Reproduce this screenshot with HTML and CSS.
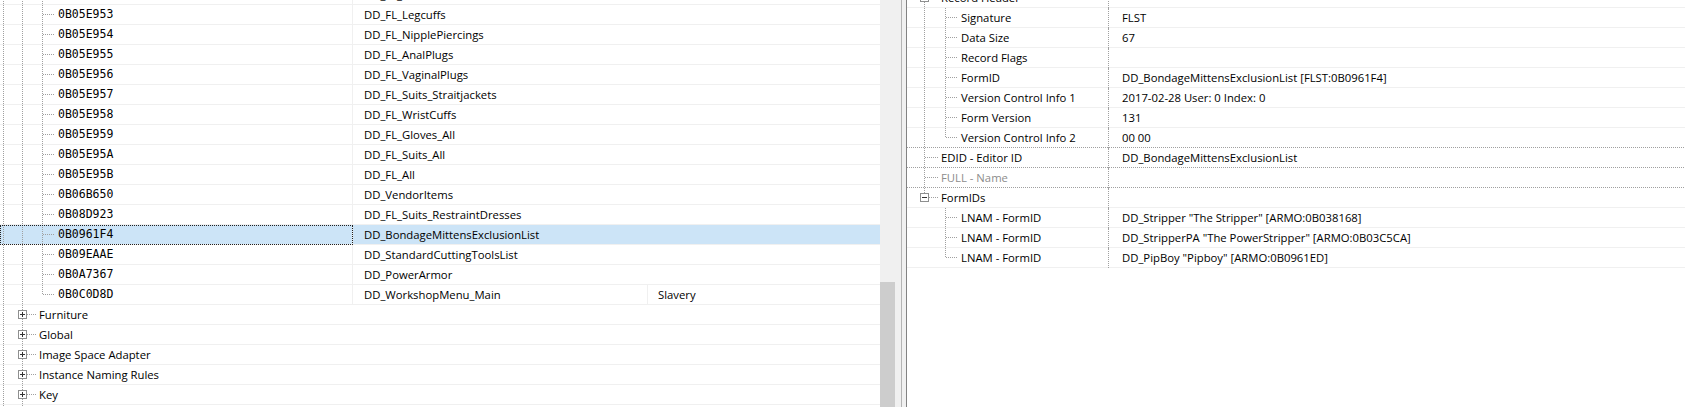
FILE: index.html
```html
<!DOCTYPE html>
<html lang="en">
<head>
  <meta charset="UTF-8" />
  <title>FormID List</title>
  <link rel="stylesheet" href="styles.css">
</head>
<body>
  <div class="window">

    <!-- record tree (left) -->
    <section class="pane-left">
      <div class="list">
        <div class="row">
          <div class="cell c-id"><i class="g w19 ln"></i><i class="g w20 ln"></i><i class="g w19 tee"></i><span class="fid">0B05E952</span></div>
          <div class="cell c-name">DD_FL_Harnesses</div>
          <div class="cell c-extra"></div>
        </div>
        <div class="row">
          <div class="cell c-id"><i class="g w19 ln"></i><i class="g w20 ln"></i><i class="g w19 tee"></i><span class="fid">0B05E953</span></div>
          <div class="cell c-name">DD_FL_Legcuffs</div>
          <div class="cell c-extra"></div>
        </div>
        <div class="row">
          <div class="cell c-id"><i class="g w19 ln"></i><i class="g w20 ln"></i><i class="g w19 tee"></i><span class="fid">0B05E954</span></div>
          <div class="cell c-name">DD_FL_NipplePiercings</div>
          <div class="cell c-extra"></div>
        </div>
        <div class="row">
          <div class="cell c-id"><i class="g w19 ln"></i><i class="g w20 ln"></i><i class="g w19 tee"></i><span class="fid">0B05E955</span></div>
          <div class="cell c-name">DD_FL_AnalPlugs</div>
          <div class="cell c-extra"></div>
        </div>
        <div class="row">
          <div class="cell c-id"><i class="g w19 ln"></i><i class="g w20 ln"></i><i class="g w19 tee"></i><span class="fid">0B05E956</span></div>
          <div class="cell c-name">DD_FL_VaginalPlugs</div>
          <div class="cell c-extra"></div>
        </div>
        <div class="row">
          <div class="cell c-id"><i class="g w19 ln"></i><i class="g w20 ln"></i><i class="g w19 tee"></i><span class="fid">0B05E957</span></div>
          <div class="cell c-name">DD_FL_Suits_Straitjackets</div>
          <div class="cell c-extra"></div>
        </div>
        <div class="row">
          <div class="cell c-id"><i class="g w19 ln"></i><i class="g w20 ln"></i><i class="g w19 tee"></i><span class="fid">0B05E958</span></div>
          <div class="cell c-name">DD_FL_WristCuffs</div>
          <div class="cell c-extra"></div>
        </div>
        <div class="row">
          <div class="cell c-id"><i class="g w19 ln"></i><i class="g w20 ln"></i><i class="g w19 tee"></i><span class="fid">0B05E959</span></div>
          <div class="cell c-name">DD_FL_Gloves_All</div>
          <div class="cell c-extra"></div>
        </div>
        <div class="row">
          <div class="cell c-id"><i class="g w19 ln"></i><i class="g w20 ln"></i><i class="g w19 tee"></i><span class="fid">0B05E95A</span></div>
          <div class="cell c-name">DD_FL_Suits_All</div>
          <div class="cell c-extra"></div>
        </div>
        <div class="row">
          <div class="cell c-id"><i class="g w19 ln"></i><i class="g w20 ln"></i><i class="g w19 tee"></i><span class="fid">0B05E95B</span></div>
          <div class="cell c-name">DD_FL_All</div>
          <div class="cell c-extra"></div>
        </div>
        <div class="row">
          <div class="cell c-id"><i class="g w19 ln"></i><i class="g w20 ln"></i><i class="g w19 tee"></i><span class="fid">0B06B650</span></div>
          <div class="cell c-name">DD_VendorItems</div>
          <div class="cell c-extra"></div>
        </div>
        <div class="row">
          <div class="cell c-id"><i class="g w19 ln"></i><i class="g w20 ln"></i><i class="g w19 tee"></i><span class="fid">0B08D923</span></div>
          <div class="cell c-name">DD_FL_Suits_RestraintDresses</div>
          <div class="cell c-extra"></div>
        </div>
        <div class="row sel">
          <div class="cell c-id"><i class="g w19 ln"></i><i class="g w20 ln"></i><i class="g w19 tee"></i><span class="fid">0B0961F4</span></div>
          <div class="cell c-name">DD_BondageMittensExclusionList</div>
          <div class="cell c-extra"></div>
        </div>
        <div class="row">
          <div class="cell c-id"><i class="g w19 ln"></i><i class="g w20 ln"></i><i class="g w19 tee"></i><span class="fid">0B09EAAE</span></div>
          <div class="cell c-name">DD_StandardCuttingToolsList</div>
          <div class="cell c-extra"></div>
        </div>
        <div class="row">
          <div class="cell c-id"><i class="g w19 ln"></i><i class="g w20 ln"></i><i class="g w19 tee"></i><span class="fid">0B0A7367</span></div>
          <div class="cell c-name">DD_PowerArmor</div>
          <div class="cell c-extra"></div>
        </div>
        <div class="row">
          <div class="cell c-id"><i class="g w19 ln"></i><i class="g w20 ln"></i><i class="g w19 end"></i><span class="fid">0B0C0D8D</span></div>
          <div class="cell c-name has-extra">DD_WorkshopMenu_Main</div>
          <div class="cell c-extra">Slavery</div>
        </div>

        <div class="row grp">
          <div class="cell"><i class="g w19 ln"></i><i class="g w20 node"><b class="exp plus"></b></i><span>Furniture</span></div>
        </div>
        <div class="row grp">
          <div class="cell"><i class="g w19 ln"></i><i class="g w20 node"><b class="exp plus"></b></i><span>Global</span></div>
        </div>
        <div class="row grp">
          <div class="cell"><i class="g w19 ln"></i><i class="g w20 node"><b class="exp plus"></b></i><span>Image Space Adapter</span></div>
        </div>
        <div class="row grp">
          <div class="cell"><i class="g w19 ln"></i><i class="g w20 node"><b class="exp plus"></b></i><span>Instance Naming Rules</span></div>
        </div>
        <div class="row grp">
          <div class="cell"><i class="g w19 ln"></i><i class="g w20 node"><b class="exp plus"></b></i><span>Key</span></div>
        </div>
        <div class="row grp">
          <div class="cell"><i class="g w19 ln"></i><i class="g w20 node"><b class="exp plus"></b></i><span>Keyword</span></div>
        </div>
      </div>
    </section>

    <div class="vscroll"><div class="thumb"></div></div>
    <div class="splitter"></div>

    <!-- record view (right) -->
    <section class="pane-right">
      <div class="tree">
        <div class="row">
          <div class="cell c-key"><i class="g w21 node"><b class="exp minus"></b></i><span>Record Header</span></div>
          <div class="cell c-val"></div>
        </div>
        <div class="row">
          <div class="cell c-key"><i class="g w21 ln"></i><i class="g w20 tee"></i><span>Signature</span></div>
          <div class="cell c-val">FLST</div>
        </div>
        <div class="row">
          <div class="cell c-key"><i class="g w21 ln"></i><i class="g w20 tee"></i><span>Data Size</span></div>
          <div class="cell c-val">67</div>
        </div>
        <div class="row">
          <div class="cell c-key"><i class="g w21 ln"></i><i class="g w20 tee"></i><span>Record Flags</span></div>
          <div class="cell c-val"></div>
        </div>
        <div class="row">
          <div class="cell c-key"><i class="g w21 ln"></i><i class="g w20 tee"></i><span>FormID</span></div>
          <div class="cell c-val">DD_BondageMittensExclusionList [FLST:0B0961F4]</div>
        </div>
        <div class="row">
          <div class="cell c-key"><i class="g w21 ln"></i><i class="g w20 tee"></i><span>Version Control Info 1</span></div>
          <div class="cell c-val">2017-02-28 User: 0 Index: 0</div>
        </div>
        <div class="row">
          <div class="cell c-key"><i class="g w21 ln"></i><i class="g w20 tee"></i><span>Form Version</span></div>
          <div class="cell c-val">131</div>
        </div>
        <div class="row dotsep">
          <div class="cell c-key"><i class="g w21 ln"></i><i class="g w20 end"></i><span>Version Control Info 2</span></div>
          <div class="cell c-val">00 00</div>
        </div>
        <div class="row dotsep">
          <div class="cell c-key"><i class="g w21 tee long"></i><span>EDID - Editor ID</span></div>
          <div class="cell c-val">DD_BondageMittensExclusionList</div>
        </div>
        <div class="row dotsep">
          <div class="cell c-key"><i class="g w21 tee long"></i><span class="muted">FULL - Name</span></div>
          <div class="cell c-val"></div>
        </div>
        <div class="row">
          <div class="cell c-key"><i class="g w21 node last"><b class="exp minus"></b></i><span>FormIDs</span></div>
          <div class="cell c-val"></div>
        </div>
        <div class="row">
          <div class="cell c-key"><i class="g w21"></i><i class="g w20 tee"></i><span>LNAM - FormID</span></div>
          <div class="cell c-val">DD_Stripper "The Stripper" [ARMO:0B038168]</div>
        </div>
        <div class="row">
          <div class="cell c-key"><i class="g w21"></i><i class="g w20 tee"></i><span>LNAM - FormID</span></div>
          <div class="cell c-val">DD_StripperPA "The PowerStripper" [ARMO:0B03C5CA]</div>
        </div>
        <div class="row">
          <div class="cell c-key"><i class="g w21"></i><i class="g w20 end"></i><span>LNAM - FormID</span></div>
          <div class="cell c-val">DD_PipBoy "Pipboy" [ARMO:0B0961ED]</div>
        </div>
      </div>
    </section>

  </div>
</body>
</html>
```

FILE: styles.css
```css
body {
  margin: 0;
  font-family: "Open Sans", "Segoe UI", sans-serif;
  font-size: 11.3px;
  color: #000;
  background-color: #fff;
  overflow: hidden;
}

.window {
  display: flex;
  height: 407px;
  overflow: hidden;
}

/* ---- rows shared by both trees ---- */

.row {
  display: flex;
  height: 20px;
  background: linear-gradient(#f0f0f0, #f0f0f0) left bottom / 100% 1px no-repeat;
}

.row.sel {
  background-color: #cce4f7;
}

.row.dotsep {
  background: repeating-linear-gradient(to right, #a0a0a0 0 1px, transparent 1px 2px) left bottom / 100% 1px no-repeat;
}

.cell {
  display: flex;
  align-items: flex-start;
  line-height: 19px;
  white-space: nowrap;
  overflow: hidden;
  box-sizing: border-box;
}

.muted {
  color: #8c8c8c;
}

/* ---- dotted tree guides ---- */

.g {
  flex: none;
  height: 20px;
  background-repeat: no-repeat;
}

.w19 { width: 19px; }
.w20 { width: 20px; }
.w21 { width: 21px; }

.ln,
.tee,
.end,
.node {
  background-image:
    repeating-linear-gradient(to bottom, #a0a0a0 0 1px, transparent 1px 2px),
    repeating-linear-gradient(to right, #a0a0a0 0 1px, transparent 1px 2px);
}

.ln {
  background-size: 1px 100%, 0 0;
  background-position: var(--gx) 0, 0 0;
}

.tee {
  background-size: 1px 100%, var(--hw) 1px;
  background-position: var(--gx) 0, calc(var(--gx) + 1px) 9px;
}

.end {
  background-size: 1px 10px, var(--hw) 1px;
  background-position: var(--gx) 0, calc(var(--gx) + 1px) 9px;
}

.tee.long {
  --hw: 14px;
}

.node {
  background-size: 1px 100%, 10px 1px;
  background-position: var(--gx) 0, calc(var(--gx) + 5px) 9px;
}

.node.last {
  background-size: 1px 5px, 10px 1px;
}

.exp {
  display: block;
  width: 9px;
  height: 9px;
  box-sizing: border-box;
  margin-top: 5px;
  margin-left: calc(var(--gx) - 4px);
  border: 1px solid #8e8f8f;
  background-color: #fff;
  background-image: linear-gradient(#333, #333), linear-gradient(#333, #333);
  background-repeat: no-repeat;
  background-size: 5px 1px, 1px 5px;
  background-position: 1px 3px, 3px 1px;
}

.exp.minus {
  background-size: 5px 1px, 0 0;
}

/* ---- left pane: record list ---- */

.pane-left {
  --gx: 3px;
  --hw: 12px;
  width: 880px;
  flex: none;
  overflow: hidden;
}

.list {
  margin-top: -15px;
}

.c-id {
  width: 353px;
  border-right: 1px solid #f0f0f0;
}

.grp .cell {
  flex: 1;
}

.fid {
  font-family: "DejaVu Sans Mono", monospace;
  font-size: 11.5px;
}

.sel .c-id {
  outline: 1px dotted #222;
  outline-offset: -1px;
}

.c-name {
  width: 295px;
  padding-left: 11px;
  border-right: 1px solid transparent;
}

.c-name.has-extra {
  border-right-color: #f0f0f0;
}

.c-extra {
  flex: 1;
  padding-left: 10px;
}

.vscroll {
  width: 17px;
  flex: none;
  display: flex;
  flex-direction: column;
  background-color: #f0f0f0;
}

.thumb {
  flex: 1;
  margin: 282px 2px 0 0;
  background-color: #cdcdcd;
}

.splitter {
  width: 9px;
  flex: none;
  background: linear-gradient(#b4b4b4, #b4b4b4) 4px 0 / 1px 100% no-repeat, #f0f0f0;
}

/* ---- right pane: record view ---- */

.pane-right {
  --gx: 4px;
  --hw: 12px;
  flex: 1;
  overflow: hidden;
  border-left: 1px solid #828282;
}

.tree {
  margin-top: -12px;
}

.c-key {
  width: 202px;
  flex: none;
  padding-left: 13px;
  border-right: 1px dotted #a0a0a0;
}

.c-val {
  flex: 1;
  padding-left: 13px;
}
```
